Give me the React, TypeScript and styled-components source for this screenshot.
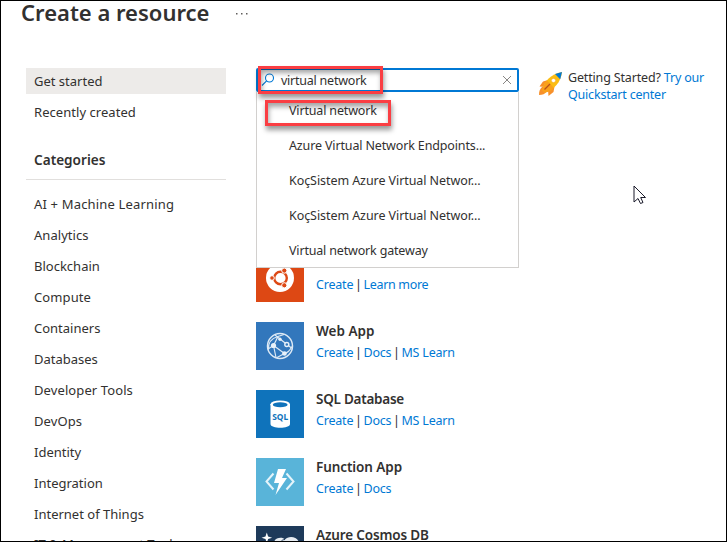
import React from "react";
import styled, { createGlobalStyle } from "styled-components";

const GlobalStyle = createGlobalStyle`
  * { box-sizing: border-box; }
  body { margin: 0; background: #fff; overflow: hidden; }
`;

const Page = styled.div`
  position: relative;
  width: 727px;
  height: 542px;
  overflow: hidden;
  border: 1px solid #000;
  background: #fff;
  color: #323130;
  font-family: "Noto Sans", "Open Sans", sans-serif;
  font-size: 12.5px;
  line-height: 18px;
`;

const Header = styled.header`
  display: flex;
  height: 67px;
  padding-left: 20px;
`;

const Title = styled.h1`
  margin: -6px 0 0;
  width: 214px;
  font-size: 22px;
  line-height: 34px;
  font-weight: 600;
  white-space: nowrap;
`;

const MoreIcon = styled.svg`
  margin-top: 9px;
  width: 14px;
  height: 5px;
`;

const Columns = styled.div`
  display: flex;
  align-items: flex-start;
`;

const Sidebar = styled.nav`
  display: flex;
  flex-direction: column;
  gap: 5px;
  width: 200px;
  margin-left: 25px;
  flex: none;
  font-size: 13px;
`;

const NavItem = styled.a<{ $active?: boolean; $spacing: number }>`
  height: 26px;
  padding-left: 8px;
  line-height: 26px;
  white-space: nowrap;
  letter-spacing: ${(p) => p.$spacing}px;
  background: ${(p) => (p.$active ? "#edebe9" : "transparent")};

  &:last-child {
    line-height: 24px;
  }
`;

const SectionTitle = styled.h2`
  height: 41px;
  margin: 9px 0 6px;
  padding-left: 8px;
  border-bottom: 1px solid #e1dfdd;
  font-size: 13.6px;
  font-weight: 600;
  line-height: 42px;
`;

const Main = styled.main`
  position: relative;
  width: 263px;
  margin-left: 30px;
  flex: none;
`;

const SearchBox = styled.div`
  display: flex;
  align-items: center;
  height: 24px;
  border: 2px solid #0078d4;
  border-radius: 2px;
  padding: 0 5px 0 3px;
`;

const Query = styled.span<{ $spacing: number }>`
  flex: 1;
  margin-left: 6px;
  padding-top: 2px;
  letter-spacing: ${(p) => p.$spacing}px;
`;

const Suggestions = styled.div`
  position: absolute;
  z-index: 1;
  top: 24px;
  left: 0;
  width: 263px;
  height: 176px;
  border: 1px solid #d2d0ce;
  border-top: 0;
  background: #fff;
`;

const Suggestion = styled.div<{ $spacing: number }>`
  height: 35px;
  padding-left: 32px;
  line-height: 38px;
  white-space: nowrap;
  letter-spacing: ${(p) => p.$spacing}px;
`;

const Highlight = styled.div<{ $x: number; $y: number; $w: number; $h: number }>`
  position: absolute;
  z-index: 2;
  left: ${(p) => p.$x}px;
  top: ${(p) => p.$y}px;
  width: ${(p) => p.$w}px;
  height: ${(p) => p.$h}px;
  border: 3px solid #fa3e43;
  box-shadow: 1px 4px 5px rgba(0, 0, 0, 0.4), inset 1px 4px 5px rgba(0, 0, 0, 0.35);
`;

const Products = styled.div`
  display: flex;
  flex-direction: column;
  gap: 20px;
  padding-top: 162px;
`;

const Product = styled.article`
  display: flex;
  height: 48px;
`;

const Tile = styled.svg`
  width: 48px;
  height: 48px;
  flex: none;
`;

const ProductText = styled.div`
  margin-left: 12px;
  white-space: nowrap;
`;

const ProductName = styled.h3<{ $spacing: number }>`
  margin: 0;
  height: 21px;
  font-size: 13.5px;
  font-weight: 600;
  line-height: 18px;
  letter-spacing: ${(p) => p.$spacing}px;
`;

const Links = styled.div`
  display: flex;
  gap: 1.7px;
  line-height: 19px;
`;

const Link = styled.a<{ $spacing: number }>`
  color: #0078d4;
  letter-spacing: ${(p) => p.$spacing}px;
`;

const Quickstart = styled.aside`
  display: flex;
  gap: 5px;
  margin-left: 19px;
  line-height: 17px;
  white-space: nowrap;
`;

const Rocket = styled.svg`
  width: 25px;
  height: 26px;
  margin-top: 3px;
`;

const QuickText = styled.div`
  margin-top: 1px;
  letter-spacing: -0.16px;
`;

const Cursor = styled.svg`
  position: absolute;
  z-index: 3;
  left: 632px;
  top: 184px;
  width: 13px;
  height: 20px;
`;

const UbuntuArt = () => (
  <>
    <rect width="48" height="48" fill="#dd4814" />
    <circle cx="24" cy="24" r="14" fill="#fff" />
    <circle cx="24.5" cy="24" r="6.3" fill="none" stroke="#dd4814" strokeWidth="2.4" />
    <g fill="#dd4814" stroke="#fff" strokeWidth="1">
      <circle cx="16" cy="24" r="2.3" />
      <circle cx="28.3" cy="16.6" r="2.6" />
      <circle cx="28.3" cy="31.3" r="2.6" />
    </g>
  </>
);

const WebArt = () => (
  <>
    <rect width="48" height="48" fill="#3277bc" />
    <g fill="none" stroke="#dce9f5" strokeWidth="1.2">
      <circle cx="24" cy="24" r="12.5" strokeWidth="1.5" />
      <path d="M17.500 23.500 22 14.500 28 12.500M17.500 23.500 20 35.500M17.500 23.500 12 27M19 13 31 22.500M31 22.500 35.500 26M28.500 31.500 17.500 23.500" />
      <path d="M22 14.500c-7 2-10 7-9.500 13M28.500 31.500 21 35.500M28.500 31.500c4-1 6-4 7.500-7" />
    </g>
    <g fill="#e8f1f9">
      <circle cx="17.5" cy="23.5" r="2.6" />
      <circle cx="24" cy="17.3" r="1.7" />
      <circle cx="28.5" cy="31.5" r="2.3" />
    </g>
    <circle cx="30.8" cy="22.5" r="2" fill="#3277bc" stroke="#e8f1f9" strokeWidth="1.4" />
  </>
);

const SqlArt = () => (
  <>
    <rect width="48" height="48" fill="#0f73bb" />
    <path d="M14.5 14v20c0 5 19.5 5 19.5 0V14z" fill="#fff" />
    <ellipse cx="24.2" cy="14.4" rx="9.8" ry="4" fill="#fff" />
    <ellipse cx="24.2" cy="14.8" rx="7.4" ry="2.5" fill="#0f73bb" />
    <text x="16.2" y="29.5" fontSize="8.5" fontWeight="700" fill="#0f73bb" textLength="16" lengthAdjust="spacingAndGlyphs">
      SQL
    </text>
  </>
);

const FunctionArt = () => (
  <>
    <rect width="48" height="48" fill="#59b4d9" />
    <path d="M17.5 15.5 10.5 23.5l7 8M30.5 15.5l7 8-7 8" fill="none" stroke="#e5f4fa" strokeWidth="2" />
    <path d="M22 11h8l-4 9h5L19.500 37l3.500-12h-5z" fill="#fff" />
  </>
);

const CosmosArt = () => (
  <>
    <rect width="48" height="48" fill="#1e3a5a" />
    <path d="M10.800 6.500l1.300 4 4 1.300-4 1.300-1.300 4-1.300-4-4-1.300 4-1.300z" fill="#fff" />
    <path d="M18 18c-1-6 8-8 11-4.500 3-4 14-3.500 14 4.500z" fill="#e8edf2" />
    <path d="M29 13.500c-1.500 0-4 1-4 2.500" fill="none" stroke="#1e3a5a" />
  </>
);

const categories: [string, number][] = [
  ["AI + Machine Learning", 0.17],
  ["Analytics", 0.05],
  ["Blockchain", 0],
  ["Compute", 0.1],
  ["Containers", 0],
  ["Databases", 0],
  ["Developer Tools", 0.1],
  ["DevOps", 0.1],
  ["Identity", 0],
  ["Integration", 0],
  ["Internet of Things", 0],
  ["IT & Management Tools", 0],
];

const suggestions: [string, number][] = [
  ["Virtual network", -0.16],
  ["Azure Virtual Network Endpoints...", -0.14],
  ["KoçSistem Azure Virtual Networ...", -0.07],
  ["KoçSistem Azure Virtual Networ...", -0.07],
  ["Virtual network gateway", -0.17],
];

const linkSpacing: Record<string, number> = {
  Create: -0.2,
  Docs: -0.25,
  "MS Learn": -0.2,
  "Learn more": -0.33,
};

const products = [
  { name: "", spacing: 0, links: ["Create", "Learn more"], Art: UbuntuArt },
  { name: "Web App", spacing: 0, links: ["Create", "Docs", "MS Learn"], Art: WebArt },
  { name: "SQL Database", spacing: -0.25, links: ["Create", "Docs", "MS Learn"], Art: SqlArt },
  { name: "Function App", spacing: -0.08, links: ["Create", "Docs"], Art: FunctionArt },
  { name: "Azure Cosmos DB", spacing: -0.15, links: [], Art: CosmosArt },
];

export default function App() {
  return (
    <Page>
      <GlobalStyle />
      <Header>
        <Title>Create a resource</Title>
        <MoreIcon viewBox="0 0 14 5" fill="#605e5c">
          <rect x="1" y="3" width="1.5" height="1.5" />
          <rect x="6" y="3" width="1.5" height="1.5" />
          <rect x="11" y="3" width="1.5" height="1.5" />
        </MoreIcon>
      </Header>
      <Columns>
        <Sidebar>
          <NavItem $active $spacing={0}>Get started</NavItem>
          <NavItem $spacing={0.05}>Recently created</NavItem>
          <SectionTitle>Categories</SectionTitle>
          {categories.map(([label, spacing]) => (
            <NavItem key={label} $spacing={spacing}>{label}</NavItem>
          ))}
        </Sidebar>
        <Main>
          <SearchBox>
            <svg width="14" height="14" viewBox="0 0 14 14" fill="none" stroke="#0078d4" strokeWidth="1.1">
              <circle cx="8.5" cy="5" r="4" />
              <path d="M5.6 7.9 1 12.5" />
            </svg>
            <Query $spacing={-0.23}>virtual network</Query>
            <svg width="10" height="10" viewBox="0 0 10 10" stroke="#7a7876" strokeWidth="0.9">
              <path d="M1 1l8 8M9 1 1 9" />
            </svg>
          </SearchBox>
          <Suggestions>
            {suggestions.map(([label, spacing], i) => (
              <Suggestion key={i} $spacing={spacing}>{label}</Suggestion>
            ))}
          </Suggestions>
          <Products>
            {products.map(({ name, spacing, links, Art }) => (
              <Product key={name}>
                <Tile viewBox="0 0 48 48"><Art /></Tile>
                <ProductText>
                  <ProductName $spacing={spacing}>{name}</ProductName>
                  <Links>
                    {links.map((label, i) => (
                      <React.Fragment key={label}>
                        {i > 0 && <span>|</span>}
                        <Link $spacing={linkSpacing[label]}>{label}</Link>
                      </React.Fragment>
                    ))}
                  </Links>
                </ProductText>
              </Product>
            ))}
          </Products>
        </Main>
        <Quickstart>
          <Rocket viewBox="0 0 25 26">
            <path d="M10 9 5 10.500 1.500 15.500l6 .5zM16.500 15.500l-1 5.500-5 4-.5-6.500z" fill="#f7902b" />
            <path d="M4.500 15.500c-3 2.500-3.500 5-3.500 8.500 3.500 0 6-1 8-3.500z" fill="#f7902b" />
            <path d="M4.500 19.500C5 11 13 3 24 1c-1 10-8 18-17 20.500z" fill="#fbbd13" />
            <path d="M4.500 19.500c.5-4 2-7 4.500-10l7 7.500c-2.500 2.500-5.500 4-9 4.500z" fill="#f9a01b" />
            <path d="M17 3 24 1l-1.800 7.200z" fill="#0078d4" />
            <circle cx="15.5" cy="9.5" r="2.1" fill="#fff" stroke="#f3a21c" strokeWidth="0.5" />
            <path d="M6.500 18.500l5.500-5.500" stroke="#b8501c" strokeWidth="1.2" />
          </Rocket>
          <QuickText>
            Getting Started? <Link $spacing={-0.2}>Try our<br />Quickstart center</Link>
          </QuickText>
        </Quickstart>
      </Columns>
      <Highlight $x={257} $y={65} $w={125} $h={28} />
      <Highlight $x={264} $y={99} $w={126} $h={26} />
      <Cursor viewBox="0 0 13 20">
        <path d="M1 1v16l4-3.500 2.500 5 2.500-1-2.300-5H12.500z" fill="#fff" stroke="#1a1a2a" />
      </Cursor>
    </Page>
  );
}
